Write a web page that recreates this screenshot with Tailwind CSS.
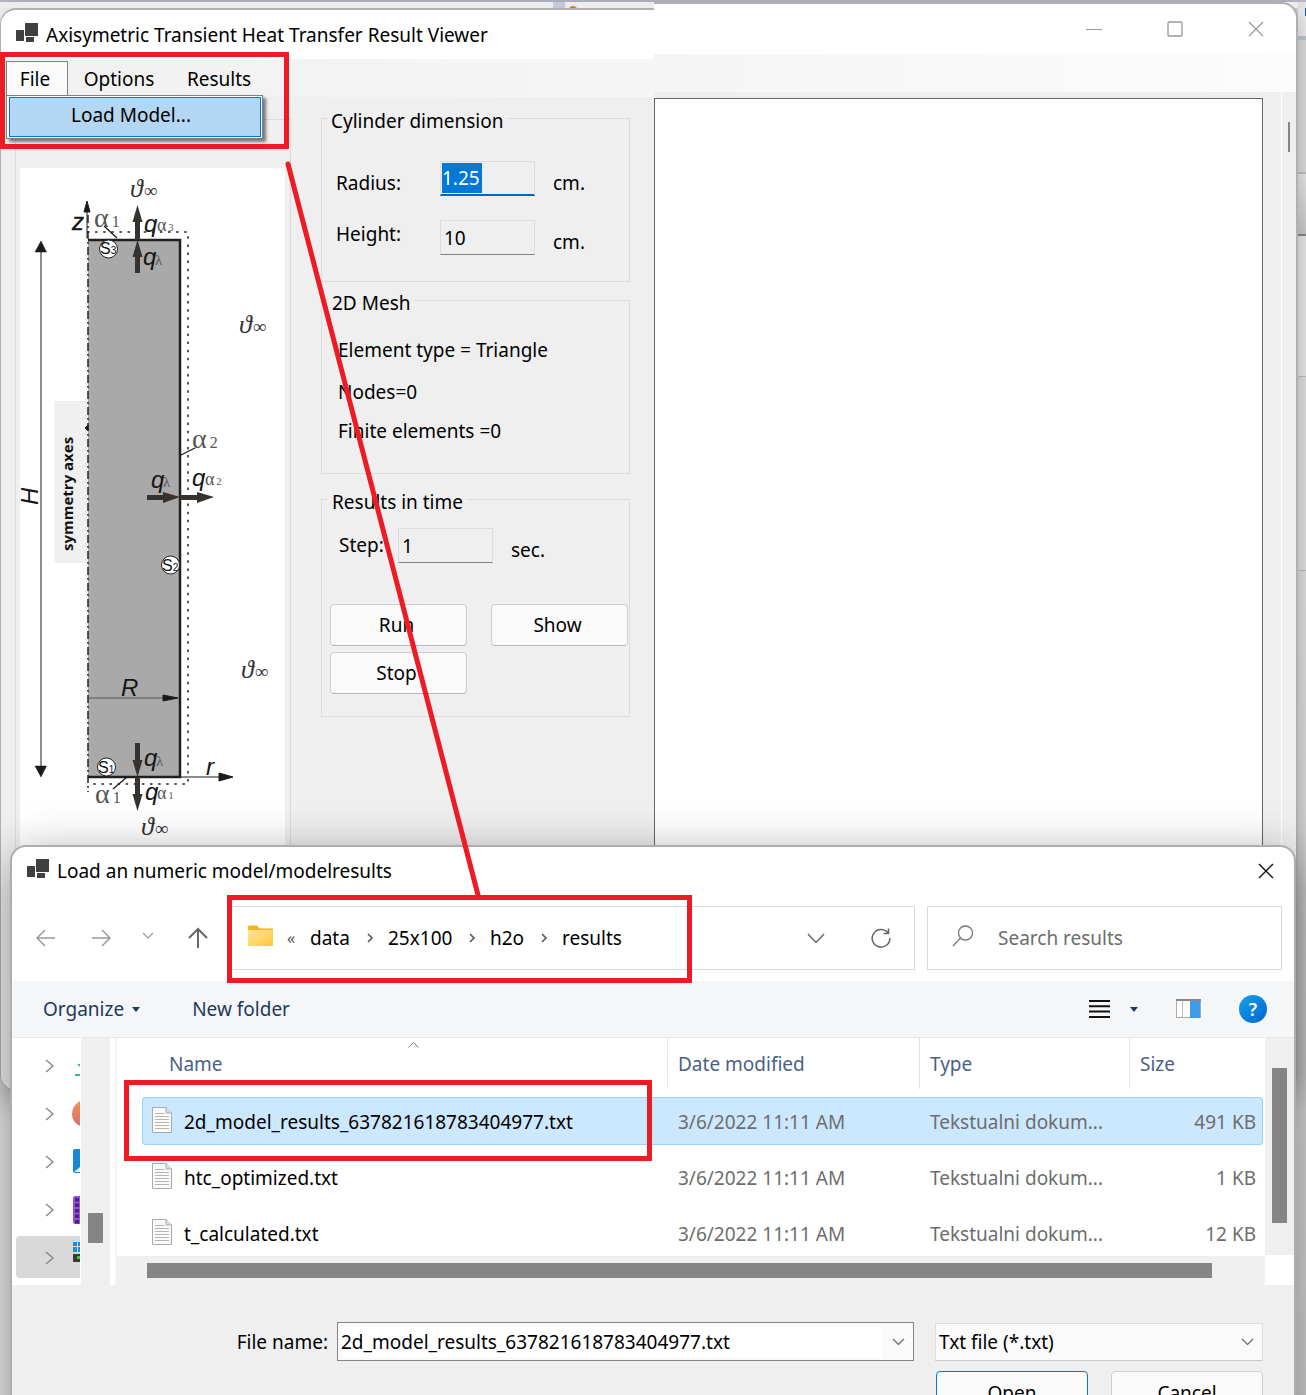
<!DOCTYPE html>
<html lang="en">
<head>
<meta charset="utf-8">
<title>Axisymetric Transient Heat Transfer Result Viewer</title>
<script src="https://cdn.jsdelivr.net/npm/@tailwindcss/browser@4"></script>
</head>
<body class="bg-[#e8e8e8] font-['Noto_Sans','Open_Sans',sans-serif] text-[19px] leading-7 text-black">
<div class="relative h-screen overflow-hidden">

  <!-- Desktop behind the windows -->
  <div class="flex h-full flex-col" aria-hidden="true">
    <div class="flex h-2 justify-between border-t-2 border-[#b9bccb] bg-[#ececec]">
      <div class="ml-[553px] flex w-7"><div class="w-3 bg-[#c5c8d8]"></div><div class="ml-1 mt-1 h-1 w-2 rounded-t-full bg-[#c98a1c]"></div></div>
    </div>
    <div class="ml-auto flex h-8 w-4 flex-col items-end border-b-4 border-l-8 border-[#c5c8d8] bg-[#f3f3f6]"><div class="h-2 w-px bg-[#1566b0]"></div></div>
    <div class="ml-auto h-[134px] w-3 border-b-2 border-[#c4c4c4] bg-[#e2e2e2]"></div>
    <div class="ml-auto h-[62px] w-3 border-b-2 border-[#8c8c8c] bg-linear-to-b from-[#efefef] to-[#cfcfcf]"></div>
    <div class="ml-auto h-[141px] w-3 border-b border-[#c4c4c4] bg-[#ededed]"></div>
    <div class="ml-auto h-[194px] w-3 border-b border-[#c4c4c4] bg-[#e6e6e6]"></div>
    <div class="ml-auto w-3 flex-1 bg-linear-to-b from-[#e4e4e4] to-[#cfcfcf]"></div>
  </div>

  <!-- Result viewer window -->
  <section class="absolute top-[2px] right-[8px] left-0 flex h-[1089px] rounded-b-2xl shadow-[0_8px_30px_rgba(0,0,0,0.3)]" aria-label="Result viewer">
    <div class="mt-[6px] flex w-[654px] shrink-0 flex-col rounded-tl-2xl rounded-bl-2xl border-t-2 border-b border-l border-[#b0b0b0] bg-[#efefef]">
      <header class="flex h-[49px] items-center gap-2 rounded-tl-2xl bg-white pl-[15px]">
        <svg class="mb-1 h-5 w-[22px]" viewBox="0 0 22 20" fill="#404040"><rect x="0" y="7" width="8" height="11"/><rect x="9" y="0" width="13" height="13"/><rect x="10" y="14" width="8" height="5"/></svg>
        <h1>Axisymetric Transient Heat Transfer Result Viewer</h1>
      </header>
      <nav class="flex h-[38px] items-start bg-linear-to-r from-[#f1f1f1] to-[#f5f5f5] pl-[5px]">
        <div class="relative">
          <button class="mt-[2px] h-[35px] w-[62px] border border-b-0 border-[#808080] bg-[#fafafa] pr-1">File</button>
          <div class="absolute top-[36px] left-0 z-10 w-[257px] border border-[#808080] bg-white p-px shadow-[3px_3px_3px_rgba(0,0,0,0.5)]">
            <button class="ml-px block h-[40px] w-[252px] border border-[#0078d7] bg-[#b3d6f2] pr-2 pb-1 text-center">Load Model...</button>
          </div>
        </div>
        <button class="mt-[6px] w-[102px]">Options</button>
        <button class="mt-[6px] w-[98px]">Results</button>
      </nav>
      <div class="flex flex-1 pl-[14px]">
        <!-- Schematic of the cylinder -->
        <div class="mt-[22px] w-[276px] border border-[#dcdcdc] pt-[48px] pl-[4px]">
          <svg class="h-[700px] w-[265px] bg-white" viewBox="20 168 265 700" font-family="Liberation Sans" role="img" aria-label="Cylinder schematic">
            <rect x="54" y="401" width="33" height="162" fill="#f0f0f0"/>
            <rect x="88" y="240" width="92" height="537" fill="#a9a9a9"/>
            <path d="M88 240H180V777H88" fill="none" stroke="#231f1c" stroke-width="2.5"/>
            <path d="M88 215V792" stroke="#222" stroke-width="1.5" stroke-dasharray="8 3 2 3"/>
            <path d="M87 232H188V784H88" fill="none" stroke="#222" stroke-width="1.5" stroke-dasharray="2.5 5.6"/>
            <g fill="#1e1a18" stroke="#1e1a18" stroke-width="1">
              <path d="M41 250V768" fill="none"/>
              <path d="M41 241l5.500 11H35zM41 777l5.500-11H35z" stroke-width=".5"/>
              <path d="M87 238V210" fill="none"/><path d="M87 201l3 11h-6z"/>
              <path d="M180 777H220" fill="none"/><path d="M233 777l-14 4v-8z"/>
              <path d="M88 698H165" stroke="#555" fill="none"/><path d="M178 698l-15 3v-6z"/>
              <path d="M104 226l13 12M181 455l14-7M113 789l14-12" stroke-width="1.3"/>
              <path d="M88 425l-3 3 3 3z"/>
            </g>
            <g fill="#363230">
              <path d="M137.500 205l5 17h-2.500v18h-5v-18h-2.500z"/>
              <path d="M137.500 240l5 17h-2.500v16h-5v-16h-2.500z"/>
              <path d="M137.500 777l5-17h-2.500v-17h-5v17h-2.500z"/>
              <path d="M137.500 811l5-17h-2.500v-17h-5v17h-2.500z"/>
              <path d="M180 497l-17-5v3h-16v5h16v3z"/>
              <path d="M214 497l-17-5v3h-17v5h17v3z"/>
            </g>
            <g fill="#fff" stroke="#222" stroke-width="1"><circle cx="108.500" cy="249" r="9"/><circle cx="170.500" cy="565" r="9"/><circle cx="106.500" cy="767" r="9"/></g>
            <g font-size="16" fill="#111"><text x="100" y="254">S<tspan font-size="10">3</tspan></text><text x="162" y="571">S<tspan font-size="10">2</tspan></text><text x="98" y="773">S<tspan font-size="10">1</tspan></text></g>
            <g font-size="24" font-style="italic" fill="#161616">
              <text x="72" y="230" stroke="#161616" stroke-width=".4">z</text><text x="144" y="232">q</text><text x="143" y="265">q</text>
              <text x="151" y="488">q</text><text x="192" y="486">q</text><text x="144" y="766">q</text><text x="145" y="800">q</text>
              <text x="121" y="696">R</text><text x="206" y="775">r</text>
              <text transform="translate(38 505) rotate(-90)">H</text>
            </g>
            <g font-family="Liberation Serif" fill="#555">
              <g font-size="28"><text x="94" y="227">α<tspan font-size="16" dx="3">1</tspan></text><text x="192" y="448">α<tspan font-size="16" dx="3">2</tspan></text><text x="95" y="803">α<tspan font-size="16" dx="3">1</tspan></text></g>
              <g font-size="18"><text x="157" y="231">α<tspan font-size="10" dx="2">3</tspan></text><text x="205" y="485">α<tspan font-size="10" dx="2">2</tspan></text><text x="157" y="799">α<tspan font-size="10" dx="2">1</tspan></text></g>
              <g font-size="15"><text x="155" y="265">λ</text><text x="163" y="487">λ</text><text x="156" y="766">λ</text></g>
              <g font-size="26" font-style="italic" fill="#333"><text x="130" y="197">ϑ<tspan font-size="19" dx="1" font-style="normal">∞</tspan></text><text x="239" y="333">ϑ<tspan font-size="19" dx="1" font-style="normal">∞</tspan></text><text x="241" y="678">ϑ<tspan font-size="19" dx="1" font-style="normal">∞</tspan></text><text x="141" y="835">ϑ<tspan font-size="19" dx="1" font-style="normal">∞</tspan></text></g>
            </g>
            <text transform="translate(73 551) rotate(-90)" font-family="Open Sans" font-weight="700" font-size="15" fill="#111">symmetry axes</text>
          </svg>
        </div>
        <!-- Parameter groups -->
        <form class="ml-[30px] flex w-[309px] flex-col pt-[8px]">
          <fieldset class="h-[177px] border border-[#dcdcdc] pl-[14px]">
            <legend class="-ml-[9px] px-1 pt-[5px] leading-[22px]">Cylinder dimension</legend>
            <div class="mt-[29px] grid grid-cols-[104px_95px_auto] gap-y-[23px]">
              <label for="radius" class="pt-2">Radius:</label>
              <div class="flex h-[35px] border border-b-2 border-[#dcdcdc] border-b-[#0067c0] p-px"><input id="radius" value="1.25" class="h-[30px] w-[40px] bg-[#0078d7] text-white outline-none"></div>
              <span class="pt-2 pl-[18px]">cm.</span>
              <label for="height">Height:</label>
              <input id="height" value="10" class="h-[35px] w-full border border-[#dcdcdc] border-b-[#808080] pl-[3px] outline-none">
              <span class="pt-2 pl-[18px]">cm.</span>
            </div>
          </fieldset>
          <fieldset class="mt-[5px] h-[187px] border border-[#dcdcdc] pl-[16px]">
            <legend class="-ml-[10px] px-1 pt-[5px] leading-[22px]">2D Mesh</legend>
            <p class="mt-[22px]">Element type = Triangle</p>
            <p class="mt-[14px]">Nodes=0</p>
            <p class="mt-[11px]">Finite elements =0</p>
          </fieldset>
          <fieldset class="mt-[12px] h-[231px] border border-[#dcdcdc] pl-[8px]">
            <legend class="-ml-[2px] px-1 pt-[5px] leading-[22px]">Results in time</legend>
            <div class="mt-[15px] flex pl-[9px]">
              <label for="step" class="w-[59px] pt-[3px]">Step:</label>
              <input id="step" value="1" class="h-[35px] w-[95px] border border-[#dcdcdc] border-b-[#808080] pl-[3px] outline-none">
              <span class="pt-2 pl-[18px]">sec.</span>
            </div>
            <div class="mt-[40px] grid grid-cols-[137px_137px] gap-x-[24px] gap-y-[6px]">
              <button type="button" class="h-[42px] rounded border border-[#cfcfcf] border-b-[#b8b8b8] bg-[#fafafa] pr-1">Run</button>
              <button type="button" class="h-[42px] rounded border border-[#cfcfcf] border-b-[#b8b8b8] bg-[#fafafa] pr-1">Show</button>
              <button type="button" class="h-[42px] rounded border border-[#cfcfcf] border-b-[#b8b8b8] bg-[#fafafa] pr-1">Stop</button>
            </div>
          </fieldset>
        </form>
      </div>
    </div>
    <div class="flex min-w-0 flex-1 flex-col rounded-tr-2xl rounded-br-2xl border-t-2 border-r-2 border-b border-[#b0b0b0] bg-[#efefef]">
      <header class="flex h-[50px] items-center justify-end gap-[65px] rounded-tr-2xl bg-white pr-[32px]">
        <button aria-label="Minimize"><svg class="size-4" viewBox="0 0 16 16"><path d="M0 8.500H16" stroke="#999"/></svg></button>
        <button aria-label="Maximize"><svg class="size-4" viewBox="0 0 16 16"><rect x="1" y="1" width="14" height="14" rx="1" fill="none" stroke="#999" stroke-width="1.300"/></svg></button>
        <button aria-label="Close"><svg class="size-4" viewBox="0 0 16 16"><path d="M1 1L15 15M15 1L1 15" stroke="#999" stroke-width="1.300"/></svg></button>
      </header>
      <div class="h-[38px] bg-linear-to-r from-[#f5f5f5] to-[#fcfcfc]"></div>
      <div class="flex flex-1">
        <div class="mt-[6px] flex-1 border border-[#666] bg-white"></div>
        <div class="w-[19px] border-r border-white"></div>
        <div class="w-[14px] pt-[30px] pl-[6px]"><div class="h-[30px] w-[2px] bg-[#858585]"></div></div>
      </div>
    </div>
  </section>

  <!-- File dialog -->
  <section class="absolute top-[845px] right-[10px] left-[10px] flex h-[620px] flex-col overflow-hidden rounded-t-2xl border-2 border-[#adadad] bg-white shadow-[0_12px_50px_rgba(0,0,0,0.4)]" role="dialog" aria-label="Load an numeric model/modelresults">
    <header class="flex h-[48px] shrink-0 items-center pr-[20px] pl-[15px]">
      <svg class="mb-1 h-5 w-[22px]" viewBox="0 0 22 20" fill="#404040"><rect x="0" y="7" width="8" height="11"/><rect x="9" y="0" width="13" height="13"/><rect x="10" y="14" width="8" height="5"/></svg>
      <h2 class="ml-2">Load an numeric model/modelresults</h2>
      <button class="ml-auto" aria-label="Close"><svg class="size-4" viewBox="0 0 16 16"><path d="M1 1L15 15M15 1L1 15" stroke="#111" stroke-width="1.400"/></svg></button>
    </header>
    <div class="flex h-[86px] shrink-0 items-start pt-[11px] pr-[12px] pl-[24px]">
      <div class="flex h-16 w-[195px] items-center">
        <button aria-label="Back"><svg class="size-5" viewBox="0 0 20 20" fill="none" stroke="#999" stroke-width="1.500"><path d="M19 10H1M9 2L1 10l8 8"/></svg></button>
        <button class="ml-[35px]" aria-label="Forward"><svg class="size-5" viewBox="0 0 20 20" fill="none" stroke="#999" stroke-width="1.500"><path d="M1 10H19M11 2l8 8-8 8"/></svg></button>
        <button class="mb-1 ml-[31px]" aria-label="Recent locations"><svg class="h-2 w-3" viewBox="0 0 12 8" fill="none" stroke="#999" stroke-width="1.200"><path d="M1 1l5 5 5-5"/></svg></button>
        <button class="ml-[33px]" aria-label="Up"><svg class="h-[22px] w-[22px]" viewBox="0 0 22 22" fill="none" stroke="#666" stroke-width="2"><path d="M11 21V2M2 11l9-9 9 9"/></svg></button>
      </div>
      <div class="flex h-16 flex-1 items-center border border-[#d9d9d9] pr-[23px] pl-[16px]">
        <svg class="mb-1 h-[22px] w-[26px]" viewBox="0 0 26 22"><defs><linearGradient id="fold" x1="0" y1="0" x2="1" y2="1"><stop offset="0" stop-color="#ffe69b"/><stop offset="1" stop-color="#ffc935"/></linearGradient></defs><path d="M0 2q0-1.500 1.500-1.500H9l2.500 3H25v4H0z" fill="#f5b21c"/><rect y="5" width="25" height="16" rx="1" fill="url(#fold)"/></svg>
        <span class="ml-[13px] w-[23px] text-[16px] text-[#555]">«</span>
        <a href="#" class="w-[52px]">data</a><svg class="h-[10px] w-[26px]" viewBox="0 0 26 10" fill="none" stroke="#555" stroke-width="1.600"><path d="M6 1l4 4-4 4"/></svg>
        <a href="#" class="w-[76px]">25x100</a><svg class="h-[10px] w-[26px]" viewBox="0 0 26 10" fill="none" stroke="#555" stroke-width="1.600"><path d="M6 1l4 4-4 4"/></svg>
        <a href="#" class="w-[46px]">h2o</a><svg class="h-[10px] w-[26px]" viewBox="0 0 26 10" fill="none" stroke="#555" stroke-width="1.600"><path d="M6 1l4 4-4 4"/></svg>
        <a href="#">results</a>
        <button class="ml-auto" aria-label="Previous locations"><svg class="h-[11px] w-[18px]" viewBox="0 0 18 11" fill="none" stroke="#666" stroke-width="1.400"><path d="M1 1l8 8.500L17 1"/></svg></button>
        <button class="ml-[46px]" aria-label="Refresh"><svg class="size-5" viewBox="0 0 20 20" fill="none" stroke="#666" stroke-width="1.500"><path d="M17 5A8.800 8.800 0 1 0 18.800 10M17.500 0.500V5.500H12.500"/></svg></button>
      </div>
      <div class="ml-[12px] flex h-16 w-[355px] items-center border border-[#d9d9d9] pl-[24px]">
        <svg class="mb-1 size-[22px]" viewBox="0 0 22 22" fill="none" stroke="#777" stroke-width="1.300"><circle cx="13.500" cy="8" r="7"/><path d="M8.500 13L1 21"/></svg>
        <input aria-label="Search results" placeholder="Search results" class="ml-[24px] w-[250px] outline-none placeholder:text-[#6d6d6d]">
      </div>
    </div>
    <div class="flex h-[57px] shrink-0 items-center border-b border-[#e8e8e8] bg-[#f4f6f8] pr-[27px] pl-[31px] text-[#1e395b]">
      <button class="flex items-center gap-2">Organize <svg class="h-[5px] w-2" viewBox="0 0 8 5" fill="#1e395b"><path d="M0 0H8L4 5z"/></svg></button>
      <button class="ml-[52px]">New folder</button>
      <button class="ml-auto flex items-center gap-[20px]" aria-label="Change view"><svg class="h-[18px] w-[21px]" viewBox="0 0 21 18" stroke="#111" stroke-width="2"><path d="M0 1H21M0 6.300H21M0 11.600H21M0 17H21"/></svg><svg class="h-[5px] w-2" viewBox="0 0 8 5" fill="#1e395b"><path d="M0 0H8L4 5z"/></svg></button>
      <button class="ml-[38px]" aria-label="Preview pane"><svg class="h-[20px] w-[25px]" viewBox="0 0 25 20"><rect x=".5" y=".5" width="24" height="18" fill="#fff" stroke="#aaa"/><path d="M0 1H25" stroke="#888" stroke-width="2"/><path d="M6.500 2V18" stroke="#bbb"/><rect x="14" y="2" width="10" height="17" fill="#3f9be8"/></svg></button>
      <button class="ml-[38px] size-7 rounded-full bg-linear-to-br from-[#1ea0e8] to-[#0067d0] text-[18px] font-semibold text-white" aria-label="Help">?</button>
    </div>
    <div class="flex h-[247px] shrink-0">
      <!-- Navigation tree -->
      <ul class="flex w-[69px] flex-col gap-[6px] pt-[6px] pr-px pl-[4px]">
        <li class="flex h-[42px] items-center justify-between pt-0.5 pl-[29px]"><svg class="h-[14px] w-[10px]" viewBox="0 0 10 14" fill="none" stroke="#8a8a8a" stroke-width="1.500"><path d="M1 1l7 6-7 6"/></svg><svg class="h-[26px] w-2" viewBox="0 0 8 26" fill="#2fc08d"><path d="M5 11h3v3z"/><rect x="3" y="21" width="5" height="2"/></svg></li>
        <li class="flex h-[42px] items-center justify-between pt-0.5 pl-[29px]"><svg class="h-[14px] w-[10px]" viewBox="0 0 10 14" fill="none" stroke="#8a8a8a" stroke-width="1.500"><path d="M1 1l7 6-7 6"/></svg><svg class="h-[26px] w-2" viewBox="0 0 8 26"><defs><linearGradient id="mus" x1="0" y1="0" x2="0" y2="1"><stop offset="0" stop-color="#f2914e"/><stop offset="1" stop-color="#d4707e"/></linearGradient></defs><path d="M8 0Q-0 5 0 13T8 25z" fill="url(#mus)"/></svg></li>
        <li class="flex h-[42px] items-center justify-between pt-0.5 pl-[29px]"><svg class="h-[14px] w-[10px]" viewBox="0 0 10 14" fill="none" stroke="#8a8a8a" stroke-width="1.500"><path d="M1 1l7 6-7 6"/></svg><svg class="h-[26px] w-2" viewBox="0 0 8 26"><path d="M8 0H3Q1 0 1 2V22Q1 24 3 24H8z" fill="#1689d6"/><path d="M2 23l6-5v5z" fill="#d8efff"/></svg></li>
        <li class="flex h-[42px] items-center justify-between pt-0.5 pl-[29px]"><svg class="h-[14px] w-[10px]" viewBox="0 0 10 14" fill="none" stroke="#8a8a8a" stroke-width="1.500"><path d="M1 1l7 6-7 6"/></svg><svg class="h-[28px] w-2" viewBox="0 0 8 28"><path d="M8 0H3Q1 0 1 2V26Q1 28 3 28H8z" fill="#9a4de0"/><path d="M5 2V28" stroke="#4a2580" stroke-width="4" stroke-dasharray="3.500 2"/></svg></li>
        <li class="flex h-[42px] items-center justify-between rounded-l bg-[#d9d9d9] pt-0.5 pl-[29px]"><svg class="h-[14px] w-[10px]" viewBox="0 0 10 14" fill="none" stroke="#8a8a8a" stroke-width="1.500"><path d="M1 1l7 6-7 6"/></svg><svg class="mb-3 h-[20px] w-2" viewBox="0 0 8 20"><path d="M1 0h4v4H1zM6 0h2v4H6zM1 5h4v5H1zM6 5h2v5H6z" fill="#1a90dd"/><rect x="1" y="12" width="7" height="8" fill="#3a3a3a"/><rect x="5" y="14" width="3" height="3" fill="#37d02f"/></svg></li>
      </ul>
      <div class="flex w-[29px] items-end bg-[#efefef] pb-[42px] pl-[7px]"><div class="h-[30px] w-[15px] bg-[#858585]"></div></div>
      <div class="w-[7px] border-r-2 border-[#f3f3f3]"></div>
      <div class="flex min-w-0 flex-1 flex-col">
        <div class="h-[218px] overflow-hidden pl-[25px]">
          <table class="relative -mt-2 w-[calc(100%-2px)] table-fixed border-separate border-spacing-x-0 border-spacing-y-2 text-left text-[#6d6d6d]">
            <thead>
              <tr class="h-[51px] text-[#4a6184]">
                <th class="relative pl-[27px] font-normal">Name<svg class="absolute top-1 left-[266px] h-[6px] w-[11px]" viewBox="0 0 11 6" fill="none" stroke="#777"><path d="M.5 5.500l5-5 5 5"/></svg></th>
                <th class="w-[252px] border-l border-[#e5e5e5] pl-[10px] font-normal">Date modified</th>
                <th class="w-[210px] border-l border-[#e5e5e5] pl-[10px] font-normal">Type</th>
                <th class="w-[134px] border-l border-[#e5e5e5] pl-[10px] font-normal">Size</th>
              </tr>
            </thead>
            <tbody>
              <tr class="h-[48px] bg-[#cce8ff]">
                <td class="rounded-l-sm border-y border-l border-[#99d1ff] pt-px pl-[9px] text-black"><div class="flex items-center gap-[12px]"><svg class="mb-1 h-[26px] w-5" viewBox="0 0 20 26"><path d="M.5 .5H14L19.500 6V25.500H.5z" fill="#fafafa" stroke="#aaa"/><path d="M14 .5V6h5.500" fill="#ddd" stroke="#aaa"/><path d="M3 6.500h9M3 9.500h14M3 12.500h14M3 15.500h14M3 18.500h14M3 21.500h14" stroke="#b5b5b5"/></svg>2d_model_results_637821618783404977.txt</div></td>
                <td class="border-y border-[#99d1ff] pt-px pl-[11px]">3/6/2022 11:11 AM</td>
                <td class="border-y border-[#99d1ff] pt-px pl-[11px]">Tekstualni dokum...</td>
                <td class="rounded-r-sm border-y border-r border-[#99d1ff] pt-px pr-[6px] text-right">491 KB</td>
              </tr>
              <tr class="h-[48px]">
                <td class="pt-px pl-[10px] text-black"><div class="flex items-center gap-[12px]"><svg class="mb-1 h-[26px] w-5" viewBox="0 0 20 26"><path d="M.5 .5H14L19.500 6V25.500H.5z" fill="#fafafa" stroke="#aaa"/><path d="M14 .5V6h5.500" fill="#ddd" stroke="#aaa"/><path d="M3 6.500h9M3 9.500h14M3 12.500h14M3 15.500h14M3 18.500h14M3 21.500h14" stroke="#b5b5b5"/></svg>htc_optimized.txt</div></td>
                <td class="pt-px pl-[11px]">3/6/2022 11:11 AM</td>
                <td class="pt-px pl-[11px]">Tekstualni dokum...</td>
                <td class="pt-px pr-[7px] text-right">1 KB</td>
              </tr>
              <tr class="h-[48px]">
                <td class="pt-px pl-[10px] text-black"><div class="flex items-center gap-[12px]"><svg class="mb-1 h-[26px] w-5" viewBox="0 0 20 26"><path d="M.5 .5H14L19.500 6V25.500H.5z" fill="#fafafa" stroke="#aaa"/><path d="M14 .5V6h5.500" fill="#ddd" stroke="#aaa"/><path d="M3 6.500h9M3 9.500h14M3 12.500h14M3 15.500h14M3 18.500h14M3 21.500h14" stroke="#b5b5b5"/></svg>t_calculated.txt</div></td>
                <td class="pt-px pl-[11px]">3/6/2022 11:11 AM</td>
                <td class="pt-px pl-[11px]">Tekstualni dokum...</td>
                <td class="pt-px pr-[7px] text-right">12 KB</td>
              </tr>
            </tbody>
          </table>
        </div>
        <div class="h-[29px] bg-[#efefef] pt-[7px] pr-[53px] pl-[30px]"><div class="h-[15px] bg-[#858585]"></div></div>
      </div>
      <div class="w-[29px]"><div class="h-[217px] bg-[#efefef] pt-[30px] pl-[7px]"><div class="h-[155px] w-[15px] bg-[#858585]"></div></div></div>
    </div>
    <form class="flex-1 bg-[#efefef] pt-[37px] pr-[31px]">
      <div class="flex items-center">
        <label for="fname" class="w-[316px] shrink-0 text-right">File name:</label>
        <div class="ml-[9px] flex h-[39px] flex-1 items-center border border-[#858585] bg-[#fafafa] pr-[8px] pl-[3px]">
          <input id="fname" value="2d_model_results_637821618783404977.txt" class="h-[30px] min-w-0 flex-1 bg-white outline-none">
          <svg class="ml-[10px] h-[8px] w-[13px]" viewBox="0 0 13 8" fill="none" stroke="#666" stroke-width="1.200"><path d="M1 1l5.500 5.500L12 1"/></svg>
        </div>
        <div class="relative ml-[21px] w-[328px]">
          <select aria-label="File type" class="h-[38px] w-full appearance-none border border-[#dedede] border-b-[#c8c8c8] bg-[#fafafa] pl-[3px] outline-none"><option>Txt file (*.txt)</option></select>
          <svg class="pointer-events-none absolute top-[15px] right-[9px] h-[8px] w-[13px]" viewBox="0 0 13 8" fill="none" stroke="#666" stroke-width="1.200"><path d="M1 1l5.500 5.500L12 1"/></svg>
        </div>
      </div>
      <div class="mt-[10px] flex justify-end gap-[23px]">
        <button type="button" class="h-[44px] w-[152px] rounded border border-[#0078d7] bg-[#fafafa]">Open</button>
        <button type="button" class="h-[44px] w-[152px] rounded border border-[#cfcfcf] bg-[#fafafa]">Cancel</button>
      </div>
    </form>
  </section>

  <!-- Callouts -->
  <div class="pointer-events-none absolute inset-0">
    <svg class="absolute inset-0 size-full"><path d="M288 164L478 895" stroke="#ed1c24" stroke-width="5" stroke-linecap="round"/></svg>
    <div class="absolute top-[52px] left-0 h-[97px] w-[289px] border-5 border-[#ed1c24]"></div>
    <div class="absolute top-[895px] left-[227px] h-[88px] w-[465px] border-5 border-[#ed1c24]"></div>
    <div class="absolute top-[1080px] left-[124px] h-[81px] w-[528px] border-5 border-[#ed1c24]"></div>
  </div>
</div>
</body>
</html>
